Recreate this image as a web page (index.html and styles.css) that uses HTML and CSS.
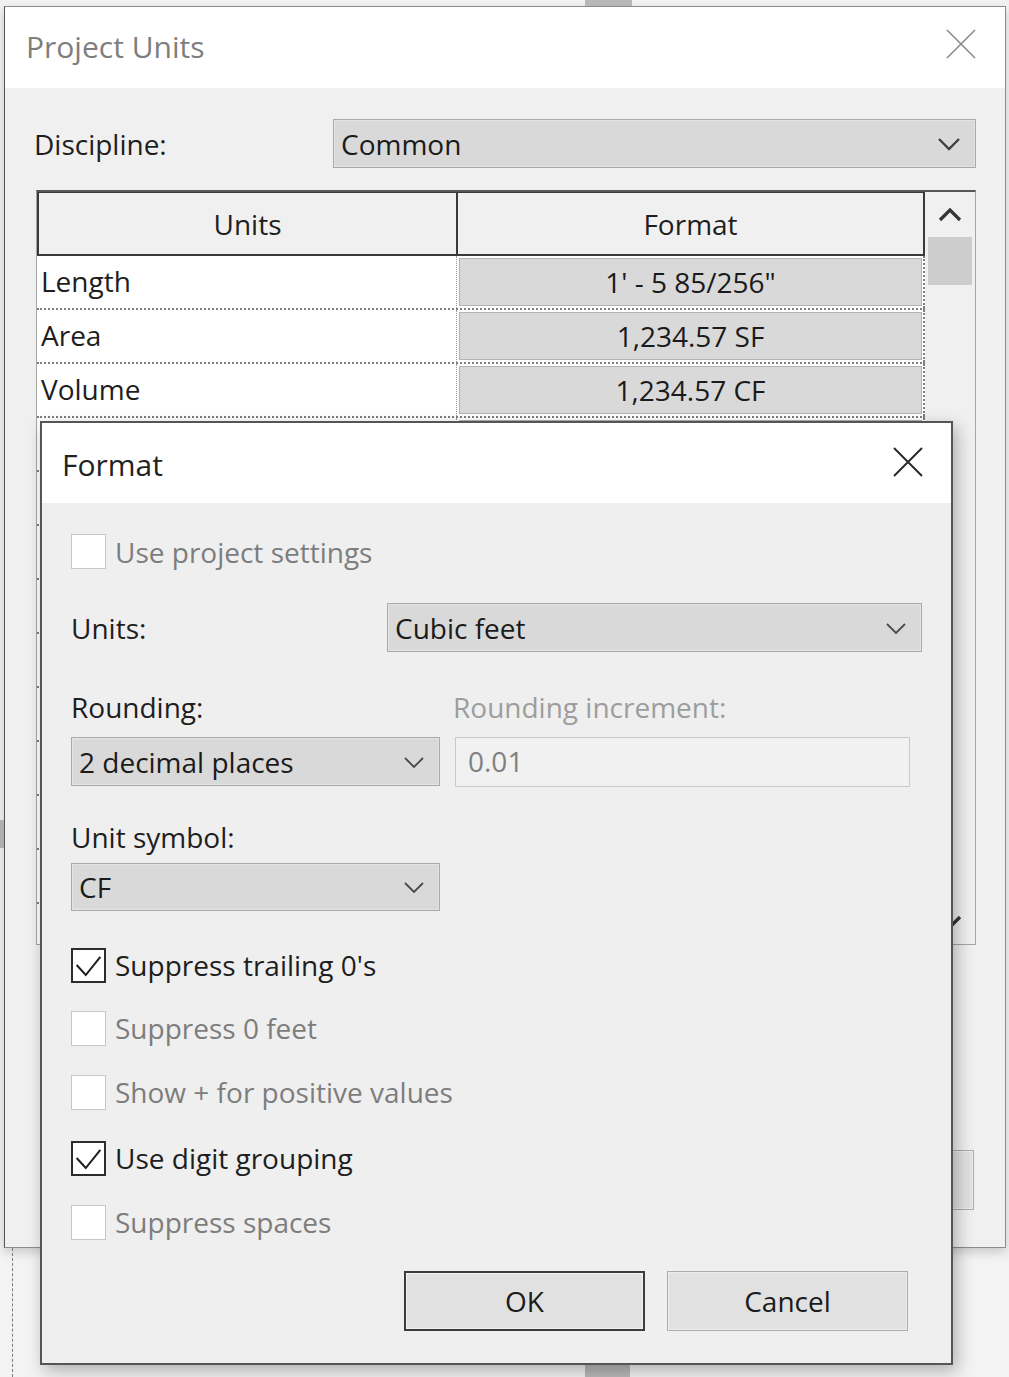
FILE: index.html
```html
<!DOCTYPE html>
<html>
<head>
<meta charset="utf-8">
<title>Project Units</title>
<link rel="stylesheet" href="styles.css">
</head>
<body>
<div class="stage">
  <span class="deco deco-top"></span>
  <span class="deco deco-bottom"></span>
  <span class="deco deco-left"></span>
  <span class="deco deco-dash"></span>

  <div class="pu">
    <div class="pu-title">
      <span class="pu-title-text">Project Units</span>
      <svg class="pu-close" width="30" height="30" viewBox="0 0 30 30"><path d="M1 1L29 29M29 1L1 29"/></svg>
    </div>
    <div class="pu-body">
      <div class="disc-row">
        <span class="label">Discipline:</span>
        <div class="combo disc-combo">
          <span class="combo-text">Common</span>
          <svg class="chev chev-disc" width="24" height="14" viewBox="0 0 24 14"><path d="M2 2L12 12L22 2"/></svg>
        </div>
      </div>
      <div class="table">
        <div class="grid">
          <div class="thead">
            <div class="th th-units">Units</div>
            <div class="th th-format">Format</div>
          </div>
          <div class="tr"><div class="td-name">Length</div><div class="td-fmt"><span class="fmt-btn">1' - 5 85/256"</span></div></div>
          <div class="tr"><div class="td-name">Area</div><div class="td-fmt"><span class="fmt-btn">1,234.57 SF</span></div></div>
          <div class="tr"><div class="td-name">Volume</div><div class="td-fmt"><span class="fmt-btn">1,234.57 CF</span></div></div>
          <div class="tr"><div class="td-name"></div><div class="td-fmt"><span class="fmt-btn"></span></div></div>
          <div class="tr"><div class="td-name"></div><div class="td-fmt"><span class="fmt-btn"></span></div></div>
          <div class="tr"><div class="td-name"></div><div class="td-fmt"><span class="fmt-btn"></span></div></div>
          <div class="tr"><div class="td-name"></div><div class="td-fmt"><span class="fmt-btn"></span></div></div>
          <div class="tr"><div class="td-name"></div><div class="td-fmt"><span class="fmt-btn"></span></div></div>
          <div class="tr"><div class="td-name"></div><div class="td-fmt"><span class="fmt-btn"></span></div></div>
          <div class="tr"><div class="td-name"></div><div class="td-fmt"><span class="fmt-btn"></span></div></div>
          <div class="tr"><div class="td-name"></div><div class="td-fmt"><span class="fmt-btn"></span></div></div>
          <div class="tr"><div class="td-name"></div><div class="td-fmt"><span class="fmt-btn"></span></div></div>
          <div class="tr"><div class="td-name"></div><div class="td-fmt"><span class="fmt-btn"></span></div></div>
        </div>
        <div class="vscroll">
          <div class="vs-arrow">
            <svg class="chev chev-bold" width="24" height="14" viewBox="0 0 24 14"><path d="M2 12L12 2L22 12"/></svg>
          </div>
          <div class="vs-thumb"></div>
          <div class="vs-track"></div>
          <div class="vs-arrow">
            <svg class="chev chev-bold" width="24" height="14" viewBox="0 0 24 14"><path d="M2 2L12 12L22 2"/></svg>
          </div>
        </div>
      </div>
      <div class="pu-buttons">
        <span class="btn"></span>
        <span class="btn"></span>
        <span class="btn"></span>
      </div>
    </div>
  </div>

  <div class="fmt">
    <div class="fmt-title">
      <span class="fmt-title-text">Format</span>
      <svg class="fmt-close" width="30" height="30" viewBox="0 0 30 30"><path d="M1 1L29 29M29 1L1 29"/></svg>
    </div>
    <div class="fmt-body">
      <div class="cb-row cb-first disabled">
        <span class="cb"></span><span class="cb-text">Use project settings</span>
      </div>
      <div class="units-row">
        <span class="label units-label">Units:</span>
        <div class="combo units-combo">
          <span class="combo-text">Cubic feet</span>
          <svg class="chev" width="22" height="14" viewBox="0 0 22 14"><path d="M2 3L11 12L20 3"/></svg>
        </div>
      </div>
      <div class="round-labels">
        <span class="label round-label">Rounding:</span>
        <span class="label label-disabled">Rounding increment:</span>
      </div>
      <div class="round-fields">
        <div class="combo small-combo">
          <span class="combo-text">2 decimal places</span>
          <svg class="chev" width="22" height="14" viewBox="0 0 22 14"><path d="M2 3L11 12L20 3"/></svg>
        </div>
        <div class="textbox">0.01</div>
      </div>
      <div class="label sym-label">Unit symbol:</div>
      <div class="combo small-combo sym-combo">
        <span class="combo-text">CF</span>
        <svg class="chev" width="22" height="14" viewBox="0 0 22 14"><path d="M2 3L11 12L20 3"/></svg>
      </div>
      <div class="cb-row cb-r1 checked">
        <span class="cb"><svg width="34" height="34" viewBox="0 0 34 34"><path d="M4 17L14 28L30 8"/></svg></span><span class="cb-text">Suppress trailing 0's</span>
      </div>
      <div class="cb-row cb-r2 disabled">
        <span class="cb"></span><span class="cb-text">Suppress 0 feet</span>
      </div>
      <div class="cb-row cb-r3 disabled">
        <span class="cb"></span><span class="cb-text">Show + for positive values</span>
      </div>
      <div class="cb-row cb-r4 checked">
        <span class="cb"><svg width="34" height="34" viewBox="0 0 34 34"><path d="M4 17L14 28L30 8"/></svg></span><span class="cb-text">Use digit grouping</span>
      </div>
      <div class="cb-row cb-r5 disabled">
        <span class="cb"></span><span class="cb-text">Suppress spaces</span>
      </div>
      <div class="fmt-buttons">
        <span class="btn btn-default">OK</span>
        <span class="btn">Cancel</span>
      </div>
    </div>
  </div>
</div>
</body>
</html>
```
FILE: styles.css
```css
* { box-sizing: border-box; }

html, body {
  margin: 0;
  padding: 0;
}

body {
  background: #f2f2f2;
  font-family: "Open Sans", "Noto Sans", "DejaVu Sans", sans-serif;
  color: #1e1e1e;
}

.stage {
  position: relative;
  width: 1009px;
  height: 1377px;
  overflow: hidden;
  background: #f3f3f3;
  padding-top: 6px;
  padding-left: 4px;
}

/* background decorations behind the dialogs */
.deco { position: absolute; display: block; }
.deco-top { left: 585px; top: 0; width: 47px; height: 6px; background: #b7b7b7; }
.deco-bottom { left: 585px; top: 1362px; width: 45px; height: 15px; background: #b9b9b9; }
.deco-left { left: 0; top: 820px; width: 4px; height: 28px; background: #b0b0b0; }
.deco-dash { left: 12px; top: 1248px; width: 0; height: 129px; border-left: 1px dashed #7a7a7a; }

/* ---------- Project Units dialog ---------- */
.pu {
  width: 1002px;
  height: 1242px;
  border: 1px solid #8c8c8c;
  border-left-color: #555;
  background: #f0f0f0;
  display: flex;
  flex-direction: column;
  box-shadow: 0 4px 10px rgba(0,0,0,0.18);
}

.pu-title {
  height: 81px;
  background: #ffffff;
  display: flex;
  align-items: center;
  padding-left: 21px;
  padding-right: 29px;
}

.pu-title-text {
  font-size: 30px;
  color: #7e7e7e;
  flex: 1;
  margin-top: -3px;
}

.pu-close path { stroke: #8a8a8a; stroke-width: 1.6; fill: none; }
.pu-close { margin-top: -8px; }

.pu-body {
  flex: 1;
  padding: 31px 29px 0 29px;
  display: flex;
  flex-direction: column;
}

.label {
  font-size: 28px;
  line-height: 36px;
  color: #1e1e1e;
}

.disc-row {
  display: flex;
  align-items: center;
  height: 49px;
}
.disc-row .label { flex: 1; }

.combo {
  display: flex;
  align-items: center;
  background: #d9d9d9;
  border: 1px solid #a9a9a9;
  box-shadow: inset 0 0 0 1px #e4e4e4;
  height: 49px;
  padding-left: 7px;
  padding-right: 14px;
}
.combo-text {
  flex: 1;
  font-size: 28px;
  color: #1b1b1b;
  white-space: nowrap;
}
.disc-combo { width: 643px; padding-right: 14px; }

.chev path { fill: none; stroke: #4a4a4a; stroke-width: 1.8; }
.chev-disc path { stroke: #404040; stroke-width: 2.4; }
.chev-bold path { stroke: #353535; stroke-width: 3.2; stroke-linejoin: miter; }

/* table */
.table {
  margin-top: 22px;
  margin-left: 2px;
  width: 940px;
  height: 755px;
  border: 1px solid #a5a5a5;
  border-top: 2px solid #575757;
  display: flex;
  background: #f0f0f0;
}

.grid {
  width: 888px;
  overflow: hidden;
  background: #ffffff;
}

.thead {
  display: flex;
  height: 64px;
  background: #f0f0f0;
}
.th {
  display: flex;
  align-items: center;
  justify-content: center;
  font-size: 28px;
  color: #1e1e1e;
  border: 2px solid #3a3a3a;
  border-top: 1px solid #3a3a3a;
}
.th-units { width: 420px; border-right: 1px solid #3a3a3a; }
.th-format { width: 468px; border-left: 1px solid #3a3a3a; }

.tr {
  display: flex;
  height: 54px;
  border-bottom: 2px dotted #7e7e7e;
}
.td-name {
  width: 420px;
  font-size: 28px;
  line-height: 50px;
  padding-left: 4px;
  background: #ffffff;
  border-right: 1px dotted #9a9a9a;
  white-space: nowrap;
}
.td-fmt {
  width: 468px;
  padding: 2px 1px 2px 2px;
  border-right: 2px dotted #7e7e7e;
  display: flex;
}
.fmt-btn {
  flex: 1;
  display: flex;
  align-items: center;
  justify-content: center;
  background: #d9d9d9;
  border: 1px solid #b3b3b3;
  font-size: 28px;
  color: #1b1b1b;
}

.vscroll {
  flex: 1;
  display: flex;
  flex-direction: column;
  background: #f0f0f0;
  padding: 0 3px 0 3px;
}
.vs-arrow {
  height: 45px;
  display: flex;
  align-items: center;
  justify-content: center;
}
.vs-thumb { height: 48px; background: #cdcdcd; }
.vs-track { flex: 1; }

.pu-buttons {
  margin-top: 205px;
  margin-right: 2px;
  display: flex;
  justify-content: flex-end;
  gap: 20px;
}

.btn {
  display: flex;
  align-items: center;
  justify-content: center;
  width: 200px;
  height: 60px;
  background: #e1e1e1;
  border: 1px solid #adadad;
  box-shadow: inset 0 0 0 1px #ececec;
  font-size: 28px;
  color: #1b1b1b;
}

/* ---------- Format dialog (overlay) ---------- */
.fmt {
  position: absolute;
  left: 40px;
  top: 421px;
  width: 913px;
  height: 944px;
  border: 2px solid #555555;
  background: #efefef;
  display: flex;
  flex-direction: column;
  box-shadow: 4px 6px 16px rgba(0,0,0,0.28);
}

.fmt-title {
  height: 80px;
  background: #ffffff;
  display: flex;
  align-items: center;
  padding-left: 20px;
  padding-right: 28px;
}
.fmt-title-text {
  flex: 1;
  font-size: 30px;
  color: #222222;
  margin-top: 2px;
}
.fmt-close path { stroke: #2a2a2a; stroke-width: 2; fill: none; }
.fmt-close { margin-top: -2px; }

.fmt-body {
  flex: 1;
  padding: 31px 29px 0 29px;
  display: flex;
  flex-direction: column;
}

.cb-row {
  display: flex;
  align-items: center;
  height: 36px;
}
.cb-first { height: 35px; }
.cb-r1 { margin-top: 36px; }
.cb-r2 { margin-top: 27px; }
.cb-r3 { margin-top: 28px; }
.cb-r4 { margin-top: 30px; }
.cb-r5 { margin-top: 28px; }

.cb {
  width: 35px;
  height: 35px;
  background: #ffffff;
  border: 1px solid #c6c6c6;
  flex: none;
  display: flex;
  align-items: center;
  justify-content: center;
}
.checked .cb { border: 2px solid #2c2c2c; }
.cb svg path { fill: none; stroke: #1e1e1e; stroke-width: 2.2; }
.cb-text {
  margin-left: 9px;
  font-size: 28px;
  color: #1e1e1e;
  white-space: nowrap;
}
.disabled .cb-text { color: #7d7d7d; }

.units-row {
  display: flex;
  align-items: center;
  margin-top: 34px;
  height: 49px;
}
.units-label { width: 316px; }
.units-combo { width: 535px; }

.round-labels {
  display: flex;
  margin-top: 37px;
}
.round-label { width: 382px; }
.label-disabled { color: #9d9d9d; }

.round-fields {
  display: flex;
  margin-top: 12px;
}
.small-combo { width: 369px; height: 49px; padding-right: 14px; }
.textbox {
  margin-left: 15px;
  width: 455px;
  height: 50px;
  border: 1px solid #c9c9c9;
  background: #f1f1f1;
  font-size: 28px;
  color: #808080;
  padding-left: 12px;
  line-height: 46px;
}

.sym-label { margin-top: 32px; }
.sym-combo { margin-top: 8px; height: 48px; }

.fmt-buttons {
  margin-top: 31px;
  display: flex;
  justify-content: flex-end;
  gap: 22px;
  padding-right: 14px;
}
.fmt-buttons .btn { width: 241px; height: 60px; }
.btn-default {
  border: 2px solid #3c3c3c;
  box-shadow: inset 0 0 0 1px #f2f2f2;
}
```
